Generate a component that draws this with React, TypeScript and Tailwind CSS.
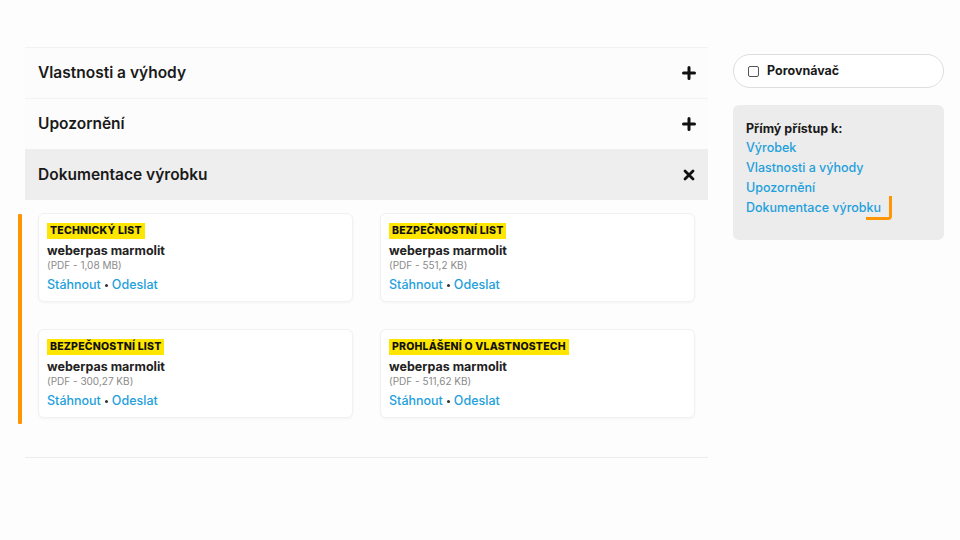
import React from "react";

const font = { fontFamily: "Inter, 'Open Sans', sans-serif" };

function Plus() {
  return (
    <svg width="14" height="14" viewBox="0 0 14 14">
      <path d="M7 1.5v11M1.5 7h11" stroke="#111" strokeWidth="3" strokeLinecap="round" />
    </svg>
  );
}

function Close() {
  return (
    <svg width="12" height="12" viewBox="0 0 12 12">
      <path d="M2 2l8 8M10 2l-8 8" stroke="#111" strokeWidth="2.8" strokeLinecap="round" />
    </svg>
  );
}

type Doc = { label: string; size: string };
const docs: Doc[] = [
  { label: "Technický list", size: "(PDF - 1,08 MB)" },
  { label: "Bezpečnostní list", size: "(PDF - 551,2 KB)" },
  { label: "Bezpečnostní list", size: "(PDF - 300,27 KB)" },
  { label: "Prohlášení o vlastnostech", size: "(PDF - 511,62 KB)" },
];

function Card({ d }: { d: Doc }) {
  return (
    <div className="h-[89px] rounded-md border border-[#f1f1f3] bg-white shadow-[0_1px_3px_rgba(0,0,0,0.04)] pl-[8px] pt-[9px] flex flex-col items-start overflow-hidden">
      <div className="bg-[#ffe600] px-[3px] h-[16px] flex items-center text-[10.5px] font-extrabold uppercase text-[#111] tracking-[0.2px]">
        {d.label}
      </div>
      <div className="mt-[4px] text-[12.5px] font-bold text-[#222] leading-[16px]">weberpas marmolit</div>
      <div className="text-[10px] text-[#8a8a8a] leading-[12px]">{d.size}</div>
      <div className="mt-[6px] text-[12.5px] leading-[16px] text-[#1ea0dc] font-medium flex items-center">
        <span>Stáhnout</span>
        <span className="mx-[4px] w-[3px] h-[3px] rounded-full bg-[#333]" />
        <span>Odeslat</span>
      </div>
    </div>
  );
}

export default function App() {
  return (
    <div className="w-[960px] h-[540px] bg-[#fdfdfe] flex overflow-hidden" style={font}>
      <div className="ml-[25px] w-[683px] pt-[47px]">
        <div className="border-t border-[#f2f2f4]">
          <div className="h-[51px] bg-[#fcfcfc] flex items-center justify-between pl-[13px] pr-[12px] border-b border-[#f2f2f2]">
            <span className="text-[15.5px] font-semibold text-[#1a1a1a]">Vlastnosti a výhody</span>
            <Plus />
          </div>
          <div className="h-[50px] bg-[#fcfcfc] flex items-center justify-between pl-[13px] pr-[12px]">
            <span className="text-[15.5px] font-semibold text-[#1a1a1a]">Upozornění</span>
            <Plus />
          </div>
          <div className="h-[51px] bg-[#eeeeee] flex items-center justify-between pl-[13px] pr-[12px]">
            <span className="text-[15.5px] font-semibold text-[#1a1a1a]">Dokumentace výrobku</span>
            <span className="mr-[1px]"><Close /></span>
          </div>
        </div>
        <div className="flex ml-[-7px] pt-[13px] pb-[33px]">
          <div className="w-[4px] h-[210px] mt-[1px] bg-[#ff9500] rounded-[1px]" />
          <div className="ml-[16px] grid grid-cols-[315px_315px] grid-rows-[89px_89px] gap-x-[27px] gap-y-[27px]">
            {docs.map((d, i) => (
              <Card key={i} d={d} />
            ))}
          </div>
        </div>
        <div className="border-t border-[#ececee]" />
      </div>
      <div className="ml-[25px] w-[211px] pt-[54px]">
        <div className="h-[34px] rounded-full border-[1.5px] border-[#dedede] bg-white flex items-center pl-[14px]">
          <span className="w-[11px] h-[11px] border-[1.5px] border-[#555] rounded-[2px] bg-white" />
          <span className="ml-[8px] text-[12.5px] font-bold text-[#1a1a1a]">Porovnávač</span>
        </div>
        <div className="mt-[17px] h-[135px] rounded-md bg-[#ececec] pl-[13px] pt-[15px]">
          <div className="text-[12.5px] font-bold text-[#1a1a1a] leading-[18px]">Přímý přístup k:</div>
          <div className="text-[12.5px] text-[#1ea0dc] font-medium leading-[20px]">
            <div>Výrobek</div>
            <div>Vlastnosti a výhody</div>
            <div>Upozornění</div>
            <div className="relative inline-block">
              Dokumentace výrobku
              <span className="absolute right-[-11px] top-[-2px] w-[26px] h-[24px] border-r-[3px] border-b-[3px] border-[#ff9500] rounded-br-[4px]" />
            </div>
          </div>
        </div>
      </div>
    </div>
  );
}
